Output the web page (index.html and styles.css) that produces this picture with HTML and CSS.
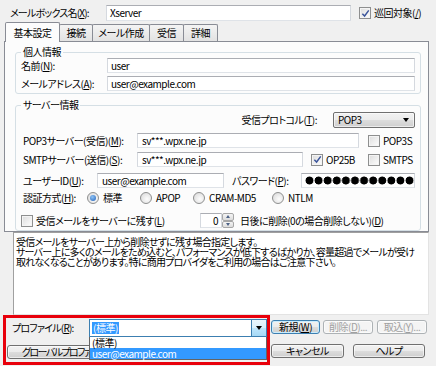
FILE: index.html
```html
<!DOCTYPE html>
<html lang="ja">
<head>
<meta charset="utf-8">
<title>メールボックス設定</title>
<link rel="stylesheet" href="styles.css">
</head>
<body>
<div class="top">
  <span class="lbl-mb">メールボックス名(<u>X</u>):</span>
  <span class="tb tb-mb">Xserver</span>
  <span class="cbx cbx-top"><span class="cb on"><svg viewBox="0 0 10 10" width="9" height="9"><path d="M1.5 5.2 L4 7.8 L8.6 1.6" fill="none" stroke="#3b559b" stroke-width="1.6"/></svg></span>巡回対象(<u>/</u>)</span>
</div>
<div class="tabs">
  <span class="tab sel t1">基本設定</span>
  <span class="tab t2">接続</span>
  <span class="tab t3">メール作成</span>
  <span class="tab t4">受信</span>
  <span class="tab t5">詳細</span>
</div>
<div class="panel">
  <fieldset class="grp g1">
    <legend>個人情報</legend>
    <div class="row">
      <span class="l1">名前(<u>N</u>):</span>
      <span class="tb w-name">user</span>
    </div>
    <div class="row r-addr">
      <span class="l1">メールアドレス(<u>A</u>):</span>
      <span class="tb w-name">user@example.com</span>
    </div>
  </fieldset>
  <fieldset class="grp g2">
    <legend>サーバー情報</legend>
    <div class="row prow">
      <span class="l-proto">受信プロトコル(<u>T</u>):</span>
      <span class="select"><span class="sel-txt">POP3</span><span class="arrow"></span></span>
    </div>
    <div class="row r-pop">
      <span class="l2">POP3サーバー(受信)(<u>M</u>):</span>
      <span class="tb w-pop">sv***.wpx.ne.jp</span>
      <span class="cbx cbx-pop3s"><span class="cb"></span>POP3S</span>
    </div>
    <div class="row r-smtp">
      <span class="l2">SMTPサーバー(送信)(<u>S</u>):</span>
      <span class="tb w-smtp">sv***.wpx.ne.jp</span>
      <span class="cbx cbx-op"><span class="cb on"><svg viewBox="0 0 10 10" width="9" height="9"><path d="M1.5 5.2 L4 7.8 L8.6 1.6" fill="none" stroke="#3b559b" stroke-width="1.6"/></svg></span>OP25B</span>
      <span class="cbx"><span class="cb"></span>SMTPS</span>
    </div>
    <div class="row r-user">
      <span class="l3">ユーザーID(<u>U</u>):</span>
      <span class="tb w-user">user@example.com</span>
      <span class="l-pass">パスワード(<u>P</u>):</span>
      <span class="tb w-pass"><span class="dots" aria-label="パスワード"></span></span>
    </div>
    <div class="row r-auth">
      <span class="l4">認証方式(<u>H</u>):</span>
      <span class="rad rad-std"><span class="rb on"></span>標準</span>
      <span class="rad rad-apop"><span class="rb"></span>APOP</span>
      <span class="rad rad-cram"><span class="rb"></span>CRAM-MD5</span>
      <span class="rad"><span class="rb"></span>NTLM</span>
    </div>
    <div class="row r-keep">
      <span class="cbx cbx-keep"><span class="cb"></span>受信メールをサーバーに残す(<u>L</u>)</span>
      <span class="tb spin-in">0</span>
      <span class="spin"><span class="sp-up"></span><span class="sp-dn"></span></span>
      <span class="l-days">日後に削除(0の場合削除しない)(<u>D</u>)</span>
    </div>
  </fieldset>
</div>
<div class="desc">受信メールをサーバー上から削除せずに残す場合指定します。<br>サーバー上に多くのメールをため込むと、パフォーマンスが低下するばかりか、容量超過でメールが受け<br>取れなくなることがあります。特に商用プロバイダをご利用の場合はご注意下さい。</div>
<div class="bottom">
  <div class="bcol-left">
    <div class="prof-row">
      <span class="l-prof">プロファイル(<u>R</u>):</span>
      <span class="combo"><span class="combo-txt"><span class="hl">(標準)</span></span><span class="dd"><span class="arrow"></span></span></span>
    </div>
    <span class="btn btn-global"><span class="gtxt">グローバルプロファイル(<u>G</u>)...</span></span>
  </div>
  <div class="bcol-right">
    <div class="brow brow1">
      <span class="btn btn-new">新規(<u>W</u>)</span>
      <span class="btn dis btn-del">削除(<u>D</u>)...</span>
      <span class="btn dis btn-imp">取込(<u>Y</u>)...</span>
    </div>
    <div class="brow brow2">
      <span class="btn btn-cancel">キャンセル</span>
      <span class="btn btn-help">ヘルプ</span>
    </div>
  </div>
</div>
<div class="dd-list">
  <div class="dd-item">(標準)</div>
  <div class="dd-item cur">user@example.com</div>
</div>
<div class="redbox"></div>
</body>
</html>
```

FILE: styles.css
```css
* { box-sizing: border-box; }
html, body { margin: 0; padding: 0; }
body {
  width: 436px;
  height: 366px;
  overflow: hidden;
  position: relative;
  background: #f0f0f0;
  color: #000;
  font-family: "Noto Sans CJK JP", "Liberation Sans", sans-serif;
  font-size: 10px;
  letter-spacing: -0.5px;
  line-height: 12px;
  font-feature-settings: "palt";
  white-space: nowrap;
}
u { text-decoration: underline; text-underline-offset: 1px; text-decoration-thickness: 1px; }

/* top row */
.top { display: flex; align-items: center; height: 16px; margin-top: 5px; padding-left: 10px; }
.lbl-mb { width: 96px; letter-spacing: -0.8px; }
.tb {
  display: flex; align-items: center;
  height: 15px;
  background: #fff;
  border: 1px solid;
  border-color: #abadb3 #d5d9df #dfe3e8 #d5d9df;
  padding-left: 3px;
  overflow: hidden;
}
.tb-mb { width: 245px; height: 16px; }
.cbx { display: flex; align-items: center; }
.cbx-top { margin-left: 8px; }
.cb {
  width: 12px; height: 12px; margin-right: 3px;
  border: 1px solid #8e8f8f;
  background: linear-gradient(135deg, #dcdcdc, #fefefe);
  box-shadow: inset 0 0 0 1px #f4f4f4;
  display: flex; align-items: center; justify-content: center;
}

/* tabs */
.tabs { display: flex; align-items: flex-end; height: 19px; margin-top: 1px; padding-left: 5px; }
.tab {
  height: 17px;
  border: 1px solid #898c95; border-bottom: 0;
  border-radius: 2px 2px 0 0;
  background: linear-gradient(#f4f4f4, #e2e2e2);
  display: flex; align-items: center; justify-content: center;
  margin-left: -1px;
}
.tab.sel { height: 20px; margin-bottom: -1px; margin-left: 0; background: #fcfcfc; position: relative; z-index: 1; }
.t1 { width: 55px; }
.t2 { width: 34px; }
.t3 { width: 58px; }
.t4 { width: 35px; }
.t5 { width: 35px; }

/* panel */
.panel {
  margin-left: 4px; width: 425px;
  border: 1px solid #898c95;
  background: #fcfcfc;
  padding: 0 0 0 10px;
}
.grp {
  margin: 0; width: 406px;
  border: 1px solid #d5dfe5; border-radius: 3px;
  padding: 0 5px 2px 5px;
  min-inline-size: 0;
}
.grp legend { padding: 0 2px; height: 12px; line-height: 12px; }
.g1 { margin-top: 4px; }
.g2 { margin-top: 5px; padding-left: 7px; }
.g2 legend { margin-left: -2px; }

.row { display: flex; align-items: center; height: 15px; }
.r-addr { margin-top: 3px; }
.l1 { width: 86px; }
.w-name { width: 308px; }

.prow { height: 16px; margin-top: 1px; justify-content: flex-end; }
.select {
  width: 82px; height: 16px; margin-left: 16px;
  border: 1px solid #707070; border-radius: 2px;
  background: linear-gradient(#f2f2f2 0%, #ebebeb 50%, #dddddd 50%, #cfcfcf 100%);
  box-shadow: inset 0 0 0 1px rgba(255,255,255,.6);
  display: flex; align-items: center; justify-content: space-between;
  padding: 0 5px 0 4px;
}
.arrow { width: 0; height: 0; border-left: 3.5px solid transparent; border-right: 3.5px solid transparent; border-top: 4px solid #000; }

.r-pop { margin-top: 5px; }
.r-smtp { margin-top: 4px; }
.l2 { width: 114px; }
.w-pop { width: 222px; padding-left: 4px; }
.w-smtp { width: 166px; padding-left: 4px; }
.cbx-pop3s { margin-left: 9px; }
.cbx-op { margin-left: 8px; width: 57px; }

.r-user { margin-top: 6px; }
.l3 { width: 74px; }
.w-user { width: 127px; padding-left: 4px; }
.l-pass { margin-left: 8px; width: 69px; }
.w-pass { width: 114px; padding-left: 3px; }
.dots {
  display: block; width: 110px; height: 9px;
  background: radial-gradient(circle at 4.5px 4.5px, #000 3.7px, transparent 4.3px) 0 0 / 9.1px 9px repeat-x;
}

.r-auth { margin-top: 3px; height: 14px; }
.l4 { width: 64px; }
.rad { display: flex; align-items: center; }
.rb {
  width: 12px; height: 12px; border-radius: 50%; margin-right: 4px;
  border: 1px solid #8e8f8f;
  background: radial-gradient(circle at 60% 60%, #fdfdfd, #d6d6d6);
  display: flex; align-items: center; justify-content: center;
}
.rb.on::after { content: ""; width: 6px; height: 6px; border-radius: 50%; background: radial-gradient(circle at 40% 35%, #8fc4f5, #1f5fb8); }
.rad-std { width: 53px; }
.rad-apop { width: 53px; }
.rad-cram { width: 79px; }

.r-keep { margin-top: 8px; }
.cbx-keep { width: 179px; margin-left: -2px; }
.spin-in { width: 22px; justify-content: flex-end; padding-right: 3px; }
.spin {
  width: 12px; height: 15px;
  display: flex; flex-direction: column;
}
.sp-up, .sp-dn {
  flex: 1; border: 1px solid #a7a7a7; border-radius: 2px;
  background: linear-gradient(#f4f4f4, #dcdcdc);
  display: flex; align-items: center; justify-content: center;
}
.sp-up::after { content: ""; border-left: 2.5px solid transparent; border-right: 2.5px solid transparent; border-bottom: 3px solid #4d6185; }
.sp-dn::after { content: ""; border-left: 2.5px solid transparent; border-right: 2.5px solid transparent; border-top: 3px solid #4d6185; }
.l-days { margin-left: 6px; }

/* description */
.desc {
  margin-left: 13px; width: 416px; height: 83px;
  background: #fff;
  border: 1px solid #a0a0a0; border-right-color: #e3e3e3; border-bottom-color: #e3e3e3;
  padding: 4px 0 0 2px;
  line-height: 10px;
  letter-spacing: -0.75px;
  overflow: hidden;
}

/* bottom */
.bottom { display: flex; height: 51px; }
.bcol-left { width: 271px; padding-left: 7px; display: flex; flex-direction: column; align-items: flex-start; }
.prof-row { display: flex; align-items: center; margin-top: 4px; height: 18px; }
.l-prof { width: 82px; padding-left: 5px; letter-spacing: -0.8px; }
.combo { display: flex; width: 178px; height: 18px; border: 1px solid #3c7fb1; background: #fff; }
.combo-txt { flex: 1; display: flex; align-items: center; padding-left: 2px; }
.hl { background: #3399ff; color: #fff; padding: 0 1px; line-height: 12px; }
.dd {
  width: 15px; border-left: 1px solid #3c7fb1;
  background: linear-gradient(#eaf6fd 0%, #d9f0fc 50%, #bee6fd 50%, #a7d9f5 100%);
  display: flex; align-items: center; justify-content: center;
}
.btn {
  height: 14px;
  border: 1px solid #707070; border-radius: 3px;
  background: linear-gradient(#f2f2f2 0%, #ebebeb 50%, #dddddd 50%, #cfcfcf 100%);
  box-shadow: inset 0 0 0 1px rgba(255,255,255,.6);
  display: flex; align-items: center; justify-content: center;
}
.btn.dis { color: #a0a0a0; border-color: #adb2b5; background: #f4f4f4; }
.btn-global { margin-top: 8px; width: 86px; justify-content: flex-start; padding-left: 14px; overflow: hidden; }
.gtxt { display: block; width: 67px; overflow: hidden; letter-spacing: -1.6px; }
.bcol-right { display: flex; flex-direction: column; }
.brow { display: flex; }
.brow1 { margin-top: 5px; }
.brow2 { margin-top: 10px; }
.btn-new { width: 49px; border-color: #3c7fb1; box-shadow: inset 0 0 0 1px #c9ecfd; }
.btn-del { width: 50px; margin-left: 3px; }
.btn-imp { width: 50px; margin-left: 4px; }
.btn-cancel { width: 73px; }
.btn-help { width: 72px; margin-left: 9px; }

/* overlays */
.dd-list {
  position: absolute; left: 89px; top: 337px; width: 178px; height: 23px;
  background: #fff; border: 1px solid #646464; border-top: 0;
}
.dd-item { height: 11px; line-height: 11px; padding-left: 2px; }
.dd-item.cur { background: #3399ff; color: #fff; }
.redbox {
  position: absolute; left: 3px; top: 315px; width: 267px; height: 50px;
  border: 3px solid #e8000b;
}
```
